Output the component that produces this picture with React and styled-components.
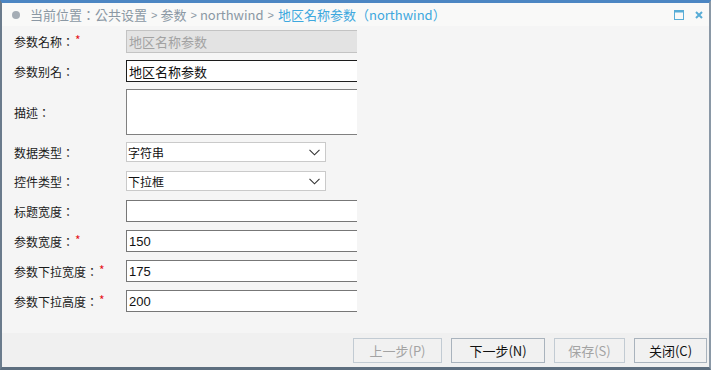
import styled, { createGlobalStyle } from "styled-components"

const Global = createGlobalStyle`
  html, body { margin: 0; padding: 0; background: #fff; }
  * { box-sizing: border-box; }
`

let Win = styled.div`
  width: 711px;
  height: 370px;
  display: flex;
  flex-flow: column;
  border-top: 3px solid #4c86c3;
  border-left: 2px solid #6a7b8c;
  border-right: 2px solid #8a98a6;
  border-bottom: 3px solid #5d6e7f;
  background: #f5f5f5;
  font-family: "Noto Sans CJK TC", "Liberation Sans", sans-serif;
`
let Header = styled.div`
  height: 23px;
  display: flex;
  align-items: center;
  padding: 0 6px 0 10px;
  background: #f9f9f8;
  font-size: 13px;
`
let Dot = styled.span`
  width: 8px;
  height: 8px;
  border-radius: 50%;
  background: #a5adb5;
  margin-right: 10px;
`
let Crumb = styled.span`
  color: ${ props => props.current ? '#3ea8de' : '#8b98a4' };
  font-family: "Noto Sans CJK TC", sans-serif;
  white-space: pre;
  margin-left: ${ props => props.gap || 0 }px;
`
let Sep = styled.span`
  color: #8b98a4;
  font-size: 11px;
  margin: 0 3px 0 4px;
  font-family: "Liberation Sans", sans-serif;
`
let Tools = styled.div`
  margin-left: auto;
  display: flex;
  align-items: center;
  gap: 11px;
`
let Form = styled.div`
  width: 355px;
  overflow: hidden;
  flex: 1;
`
let Row = styled.div`
  display: flex;
  align-items: center;
  height: ${ props => props.h || 30 }px;
`
let Label = styled.div`
  width: 124px;
  padding-left: 12px;
  flex-shrink: 0;
  font-size: 12px;
  color: #1a1a1a;
  white-space: nowrap;
`
let Star = styled.span`
  color: #e5141c;
  font-size: 12px;
  position: relative;
  top: -2px;
  margin-left: 1px;
`
let Field = styled.input`
  width: 270px;
  flex-shrink: 0;
  height: ${ props => props.h || 22 }px;
  border: 1px solid ${ props => props.focus ? '#1c1c1c' : '#777' };
  background: #fff;
  padding: 0 2px;
  font-size: 13px;
  color: #111;
  font-family: "Liberation Sans", "Noto Sans CJK SC", sans-serif;
  outline: none;
  &:disabled {
    border-color: #c3c3c3;
    background: #e3e3e3;
    color: #a2a2a2;
  }
`
let Area = styled.textarea`
  width: 270px;
  flex-shrink: 0;
  height: 46px;
  border: 1px solid #808080;
  background: #fff;
  resize: none;
  outline: none;
`
let Select = styled.div`
  width: 200px;
  flex-shrink: 0;
  height: 20px;
  border: 1px solid #cacaca;
  background: #fff;
  display: flex;
  align-items: center;
  justify-content: space-between;
  padding: 0 5px 0 1px;
  font-size: 12px;
  color: #111;
  font-family: "Noto Sans CJK SC", sans-serif;
`
let Footer = styled.div`
  height: 34px;
  background: #f0f0f0;
  display: flex;
  justify-content: flex-end;
  padding: 5px 2px 0 0;
  gap: 9px;
`
let Btn = styled.button`
  width: ${ props => props.w }px;
  height: 25px;
  background: #f1f1f1;
  border: 1px solid ${ props => props.disabled ? '#c2cbd3' : '#a9b3bd' };
  color: ${ props => props.disabled ? '#a3a3a3' : '#111' };
  font-size: 13px;
  font-family: "Noto Sans CJK SC", "Liberation Sans", sans-serif;
  padding: 0;
`

function Chevron() {
  return (
    <svg width="11" height="7" viewBox="0 0 11 7">
      <path d="M0.5 0.8 L5.5 5.8 L10.5 0.8" fill="none" stroke="#333" strokeWidth="1.1" />
    </svg>
  )
}

const rows = [
  { label: '标题宽度：', value: '' },
  { label: '参数宽度：', value: '150', req: true },
  { label: '参数下拉宽度：', value: '175', req: true },
  { label: '参数下拉高度：', value: '200', req: true },
]

export default function App() {
  return (
    <>
      <Global />
      <Win>
        <Header>
          <Dot />
          <Crumb>当前位置：</Crumb>
          <Crumb>公共设置</Crumb>
          <Sep>&gt;</Sep>
          <Crumb>参数</Crumb>
          <Sep>&gt;</Sep>
          <Crumb>northwind</Crumb>
          <Sep>&gt;</Sep>
          <Crumb current gap={1}>地区名称参数（northwind）</Crumb>
          <Tools>
            <svg width="10" height="10" viewBox="0 0 10 10">
              <rect x="0.5" y="0.5" width="9" height="9" fill="none" stroke="#58acd6" />
              <rect x="0.5" y="0.5" width="9" height="2" fill="#58acd6" />
            </svg>
            <svg width="8" height="8" viewBox="0 0 8 8">
              <path d="M1 1 L7 7 M7 1 L1 7" stroke="#58acd6" strokeWidth="2" />
            </svg>
          </Tools>
        </Header>

        <Form>
          <Row h={30}>
            <Label>参数名称：<Star>*</Star></Label>
            <Field h={23} disabled defaultValue="地区名称参数" />
          </Row>
          <Row h={30}>
            <Label>参数别名：</Label>
            <Field focus defaultValue="地区名称参数" />
          </Row>
          <Row h={52}>
            <Label>描述：</Label>
            <Area />
          </Row>
          <Row h={28}>
            <Label>数据类型：</Label>
            <Select>字符串<Chevron /></Select>
          </Row>
          <Row h={30}>
            <Label>控件类型：</Label>
            <Select>下拉框<Chevron /></Select>
          </Row>
          { rows.map((r) => (
            <Row key={r.label}>
              <Label>{ r.label }{ r.req && <Star>*</Star> }</Label>
              <Field defaultValue={ r.value } />
            </Row>
          )) }
        </Form>

        <Footer>
          <Btn w={89} disabled>上一步(P)</Btn>
          <Btn w={94}>下一步(N)</Btn>
          <Btn w={71} disabled>保存(S)</Btn>
          <Btn w={73}>关闭(C)</Btn>
        </Footer>
      </Win>
    </>
  )
}
